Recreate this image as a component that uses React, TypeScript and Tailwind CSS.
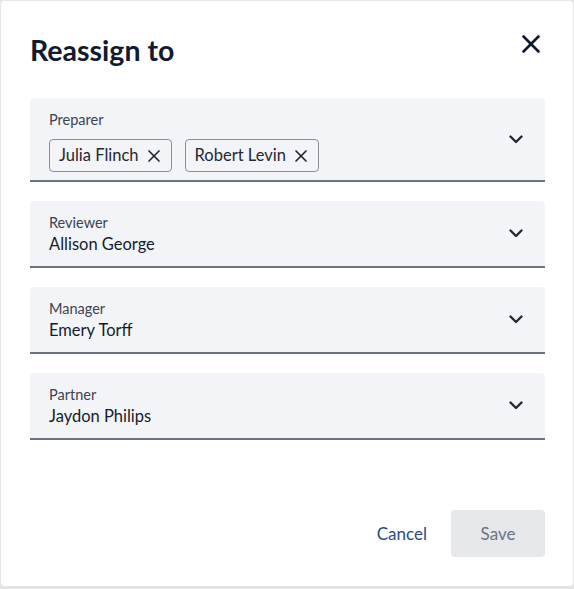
import { X } from "lucide-react"

type Field = {
  label: string
  value?: string
  chips?: string[]
}

const fields: Field[] = [
  { label: "Preparer", chips: ["Julia Flinch", "Robert Levin"] },
  { label: "Reviewer", value: "Allison George" },
  { label: "Manager", value: "Emery Torff" },
  { label: "Partner", value: "Jaydon Philips" },
]

function Chevron() {
  return (
    <svg width="14" height="9" viewBox="0 0 14 9" fill="none" className="shrink-0">
      <path d="M1.5 1.5L7 7L12.5 1.5" stroke="#1f2937" strokeWidth="2.4" strokeLinecap="round" strokeLinejoin="round" />
    </svg>
  )
}

function SelectField({ field }: { field: Field }) {
  const multi = !!field.chips
  return (
    <div className="flex items-center justify-between rounded-t-[4px] border-b-2 border-[#6b7280] bg-[#f3f4f8] pl-[19px] pr-[22px]">
      <div className={`flex flex-col pt-[14px] ${multi ? "pb-[8px]" : "pb-[12px]"}`}>
        <span className="text-[14.5px] leading-[16px] text-[#3b4252]">{field.label}</span>
        {multi ? (
          <div className="mt-[11px] flex gap-[13px]">
            {field.chips!.map((c) => (
              <span
                key={c}
                className="flex h-[33px] items-center gap-[5px] rounded-[4px] border border-[#8a8f99] pl-[9px] pr-[7px] text-[16.5px] text-[#1f2733]"
              >
                {c}
                <X size={20} strokeWidth={2} className="text-[#1f2733]" />
              </span>
            ))}
          </div>
        ) : (
          <span className="mt-[3px] text-[16.5px] leading-[20px] text-[#141c2b]">{field.value}</span>
        )}
      </div>
      <Chevron />
    </div>
  )
}

export default function App() {
  return (
    <div className="h-[589px] w-[574px] bg-[#e4e4e6]" style={{ fontFamily: "Lato, 'Open Sans', sans-serif" }}>
      <div className="flex h-[586px] w-[573px] flex-col rounded-[4px] border-l border-t border-[#e6e6e8] bg-white">
        <div className="flex items-start justify-between pl-[29px] pr-[27px] pt-[31px]">
          <h2 className="text-[28.5px] font-bold leading-[36px] text-[#111a30]">Reassign to</h2>
          <X size={30} strokeWidth={2.1} className="-mt-[3px] text-[#111a30]" />
        </div>
        <div className="mt-[30px] flex flex-col gap-[19px] pl-[29px] pr-[28px]">
          {fields.map((f) => (
            <SelectField key={f.label} field={f} />
          ))}
        </div>
        <div className="mt-auto flex items-center justify-end gap-[8px] pb-[28px] pr-[28px]">
          <button type="button" className="px-[16px] py-[12px] text-[17px] text-[#2b4a8c]">
            Cancel
          </button>
          <button
            type="button"
            className="h-[47px] w-[94px] rounded-[4px] bg-[#e5e7eb] text-[17px] text-[#6b7280]"
          >
            Save
          </button>
        </div>
      </div>
    </div>
  )
}
